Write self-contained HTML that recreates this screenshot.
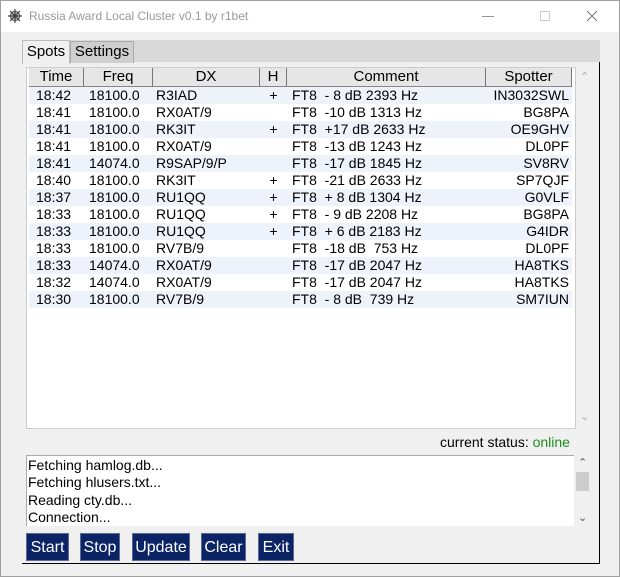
<!DOCTYPE html>
<html><head><style>
*{box-sizing:border-box;margin:0;padding:0}
body{width:620px;height:577px;background:#f0f0f0;font-family:"Liberation Sans",Arial,sans-serif;position:relative;overflow:hidden;font-size:14px;color:#000}
.abs{position:absolute}
.win{left:0;top:0;width:620px;height:577px;border:1px solid #a0a0a0}
.title{left:1px;top:1px;width:618px;height:31px;background:#fff}
.ttext{left:29px;top:9px;font-size:12px;color:#999}
table{border-collapse:collapse;table-layout:fixed}
td{height:17px;line-height:17px;padding:0 3px;white-space:nowrap;font-size:14px}
.btn{top:533px;height:28px;background:#0b2466;color:#fff;font-size:16px;line-height:28px;text-align:center;border:1px solid #5a6a90}
.hd{top:68px;height:19px;background:#e6e6e6;border-right:1px solid #777;border-bottom:1px solid #888;text-align:center;line-height:18px;font-size:15px}
</style></head><body>
<div class="abs win"></div>
<div class="abs title"></div>
<svg class="abs" style="left:8px;top:9px" width="14" height="14" viewBox="0 0 14 14"><g stroke="#444" stroke-width="1.2" fill="none"><circle cx="7" cy="7" r="2"/><circle cx="7" cy="7" r="4.5"/><path d="M7 0V14M0 7H14M2 2L12 12M12 2L2 12"/></g></svg>
<div class="abs ttext">Russia Award Local Cluster v0.1 by r1bet</div>
<div class="abs" style="left:482px;top:16px;width:12px;height:1px;background:#999"></div>
<div class="abs" style="left:540px;top:11px;width:10px;height:10px;border:1px solid #ccc"></div>
<svg class="abs" style="left:586px;top:10px" width="12" height="12"><path d="M1 1L11 11M11 1L1 11" stroke="#777" stroke-width="1"/></svg>
<div class="abs" style="left:22px;top:40px;width:578px;height:22px;background:#d9d9d9"></div>
<div class="abs" style="left:22px;top:40px;width:48px;height:24px;background:#f0f0f0;border:1px solid #bbb;border-bottom:none;text-align:center;line-height:22px;font-size:15px">Spots</div>
<div class="abs" style="left:70px;top:41px;width:64px;height:22px;background:#cfcfcf;border:1px solid #aaa;border-bottom:none;text-align:center;line-height:20px;font-size:15px">Settings</div>
<div class="abs" style="left:22px;top:62px;width:578px;height:502px;border-right:1px solid #000;border-bottom:1px solid #000"></div>
<div class="abs" style="left:26px;top:67px;width:550px;height:362px;background:#fff;border:1px solid #ccc"></div>
<div class="abs" style="left:576px;top:67px;width:16px;height:362px;background:#f0f0f0"></div>
<div class="abs" style="left:580px;top:70px;font-size:11px;color:#aaa">&#8963;</div>
<div class="abs" style="left:580px;top:410px;font-size:11px;color:#aaa">&#8964;</div>
<div class="abs hd" style="left:29px;width:55px">Time</div>
<div class="abs hd" style="left:84px;width:69px">Freq</div>
<div class="abs hd" style="left:153px;width:107px">DX</div>
<div class="abs hd" style="left:260px;width:27px">H</div>
<div class="abs hd" style="left:287px;width:199px">Comment</div>
<div class="abs hd" style="left:486px;width:86px">Spotter</div>
<table class="abs" style="left:29px;top:87px;width:543px">
<colgroup><col style="width:55px"><col style="width:69px"><col style="width:107px"><col style="width:27px"><col style="width:199px"><col style="width:86px"></colgroup>
<tbody>
<tr style="background:#eef2fa"><td style="padding-left:7px">18:42</td><td style="padding-left:5px">18100.0</td><td>R3IAD</td><td style="text-align:center">+</td><td style="padding-left:5px">FT8 &nbsp;- 8 dB 2393 Hz</td><td style="text-align:right">IN3032SWL</td></tr>
<tr><td style="padding-left:7px">18:41</td><td style="padding-left:5px">18100.0</td><td>RX0AT/9</td><td></td><td style="padding-left:5px">FT8 &nbsp;-10 dB 1313 Hz</td><td style="text-align:right">BG8PA</td></tr>
<tr style="background:#eef2fa"><td style="padding-left:7px">18:41</td><td style="padding-left:5px">18100.0</td><td>RK3IT</td><td style="text-align:center">+</td><td style="padding-left:5px">FT8 &nbsp;+17 dB 2633 Hz</td><td style="text-align:right">OE9GHV</td></tr>
<tr><td style="padding-left:7px">18:41</td><td style="padding-left:5px">18100.0</td><td>RX0AT/9</td><td></td><td style="padding-left:5px">FT8 &nbsp;-13 dB 1243 Hz</td><td style="text-align:right">DL0PF</td></tr>
<tr style="background:#eef2fa"><td style="padding-left:7px">18:41</td><td style="padding-left:5px">14074.0</td><td>R9SAP/9/P</td><td></td><td style="padding-left:5px">FT8 &nbsp;-17 dB 1845 Hz</td><td style="text-align:right">SV8RV</td></tr>
<tr><td style="padding-left:7px">18:40</td><td style="padding-left:5px">18100.0</td><td>RK3IT</td><td style="text-align:center">+</td><td style="padding-left:5px">FT8 &nbsp;-21 dB 2633 Hz</td><td style="text-align:right">SP7QJF</td></tr>
<tr style="background:#eef2fa"><td style="padding-left:7px">18:37</td><td style="padding-left:5px">18100.0</td><td>RU1QQ</td><td style="text-align:center">+</td><td style="padding-left:5px">FT8 &nbsp;+ 8 dB 1304 Hz</td><td style="text-align:right">G0VLF</td></tr>
<tr><td style="padding-left:7px">18:33</td><td style="padding-left:5px">18100.0</td><td>RU1QQ</td><td style="text-align:center">+</td><td style="padding-left:5px">FT8 &nbsp;- 9 dB 2208 Hz</td><td style="text-align:right">BG8PA</td></tr>
<tr style="background:#eef2fa"><td style="padding-left:7px">18:33</td><td style="padding-left:5px">18100.0</td><td>RU1QQ</td><td style="text-align:center">+</td><td style="padding-left:5px">FT8 &nbsp;+ 6 dB 2183 Hz</td><td style="text-align:right">G4IDR</td></tr>
<tr><td style="padding-left:7px">18:33</td><td style="padding-left:5px">18100.0</td><td>RV7B/9</td><td></td><td style="padding-left:5px">FT8 &nbsp;-18 dB &nbsp;753 Hz</td><td style="text-align:right">DL0PF</td></tr>
<tr style="background:#eef2fa"><td style="padding-left:7px">18:33</td><td style="padding-left:5px">14074.0</td><td>RX0AT/9</td><td></td><td style="padding-left:5px">FT8 &nbsp;-17 dB 2047 Hz</td><td style="text-align:right">HA8TKS</td></tr>
<tr><td style="padding-left:7px">18:32</td><td style="padding-left:5px">14074.0</td><td>RX0AT/9</td><td></td><td style="padding-left:5px">FT8 &nbsp;-17 dB 2047 Hz</td><td style="text-align:right">HA8TKS</td></tr>
<tr style="background:#eef2fa"><td style="padding-left:7px">18:30</td><td style="padding-left:5px">18100.0</td><td>RV7B/9</td><td></td><td style="padding-left:5px">FT8 &nbsp;- 8 dB &nbsp;739 Hz</td><td style="text-align:right">SM7IUN</td></tr>
</tbody></table>
<div class="abs" style="left:440px;top:434px;font-size:14px">current status: <span style="color:#1e8c1e">online</span></div>
<div class="abs" style="left:26px;top:455px;width:548px;height:71px;background:#fff;border-top:1px solid #aaa;border-left:1px solid #aaa"></div>
<div class="abs" style="left:28px;top:457px;font-size:14px;line-height:17.3px">Fetching hamlog.db...<br>Fetching hlusers.txt...<br>Reading cty.db...<br>Connection...</div>
<div class="abs" style="left:574px;top:455px;width:16px;height:71px;background:#f0f0f0"></div>
<div class="abs" style="left:576px;top:472px;width:13px;height:19px;background:#cdcdcd"></div>
<div class="abs" style="left:578px;top:456px;font-size:11px;color:#555">&#8963;</div>
<div class="abs" style="left:578px;top:511px;font-size:11px;color:#555">&#8964;</div>
<div class="abs btn" style="left:26px;width:43px">Start</div>
<div class="abs btn" style="left:80px;width:40px">Stop</div>
<div class="abs btn" style="left:132px;width:58px">Update</div>
<div class="abs btn" style="left:201px;width:45px">Clear</div>
<div class="abs btn" style="left:258px;width:36px">Exit</div>
</body></html>
